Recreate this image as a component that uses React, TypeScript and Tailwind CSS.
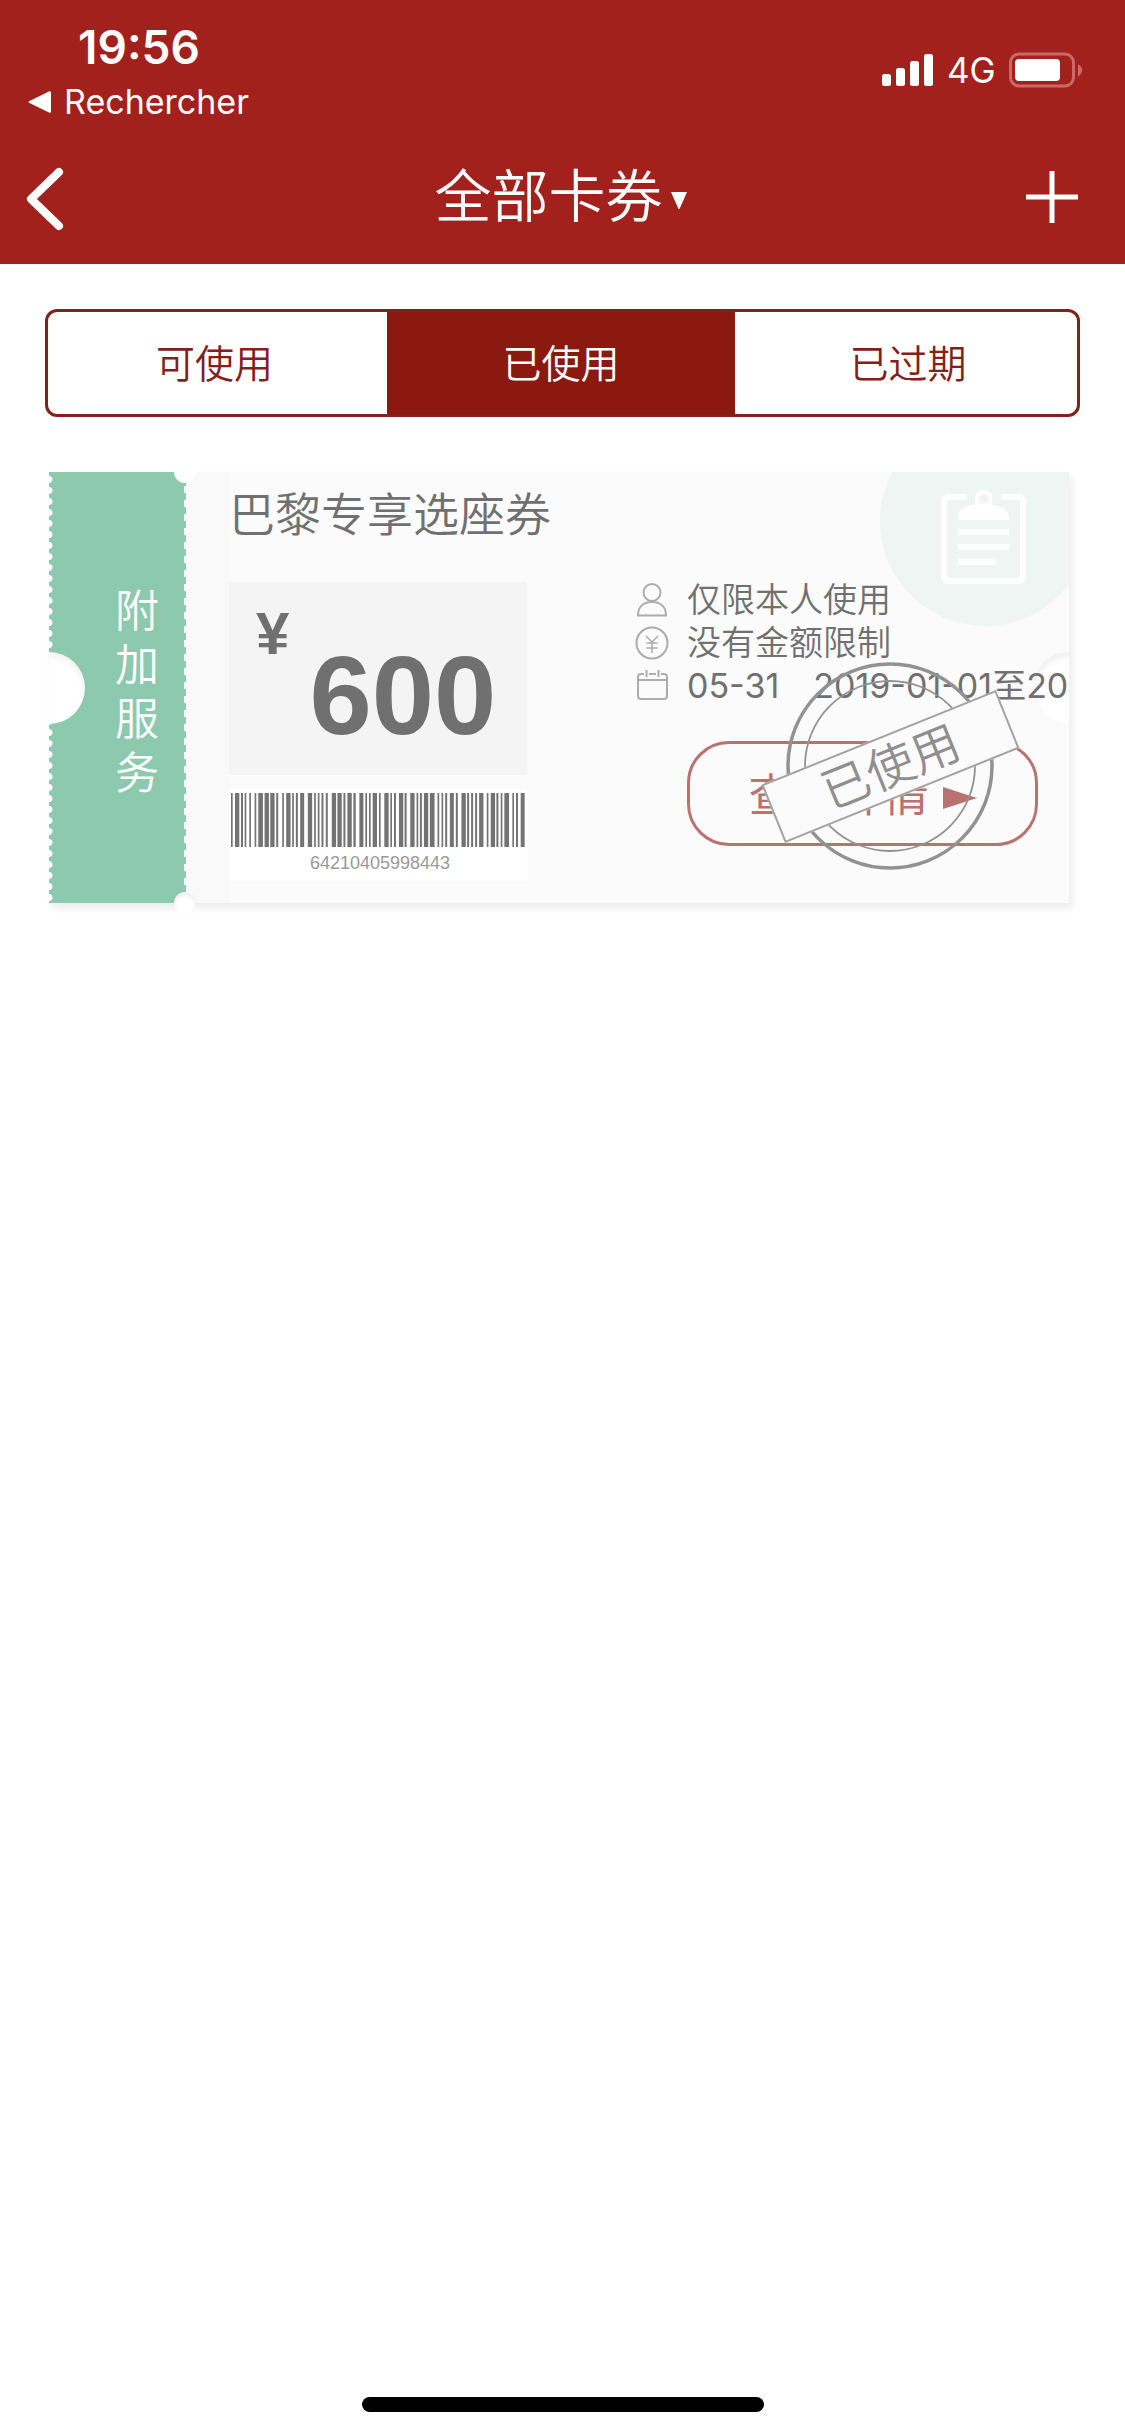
import { useState } from 'react';

const TABS = ['可使用', '已使用', '已过期'];

// [start, width] of every bar, in barcode units
const BARS = [
  [0, 5], [12, 13], [30, 6], [41, 5], [55, 5],
  [71, 5], [82, 14], [101, 13], [118, 13], [136, 6],
  [154, 5], [166, 13], [184, 5], [195, 6], [208, 12],
  [231, 13], [250, 5], [261, 5], [272, 6], [285, 6],
  [303, 13], [320, 13], [338, 6], [350, 13], [368, 7],
  [386, 12], [404, 5], [415, 5], [426, 13], [445, 5],
  [461, 13], [479, 5], [490, 6], [505, 13], [522, 6],
  [539, 13], [558, 5], [568, 6], [580, 13], [598, 14],
  [621, 5], [633, 5], [644, 6], [658, 12], [676, 6],
  [693, 13], [710, 6], [722, 6], [734, 6], [746, 13],
  [769, 5], [781, 13], [798, 6], [811, 5], [822, 14],
  [846, 5], [857, 6], [871, 12],
];

function StatusBar() {
  return (
    <div className="flex h-[132px] items-start justify-between pl-[28px] pr-[42px] font-['Inter','Liberation_Sans',sans-serif]">
      <div className="pt-[23px]">
        <div className="pl-[50px] text-[46px] font-semibold leading-[48px]">19:56</div>
        <a href="#search" className="mt-[13px] flex items-center gap-[13px] text-[34px] leading-[36px]">
          <svg width="23" height="22" viewBox="0 0 23 22" fill="currentColor" aria-hidden="true">
            <path d="M1 10.200 21 .4Q23 0 23 1.500V20.500Q23 22 21 21.600L1 11.800Q0 11 1 10.200Z" />
          </svg>
          Rechercher
        </a>
      </div>
      <div className="flex items-center pt-[52px] text-[35px]">
        <svg width="52" height="32" viewBox="0 0 52 32" fill="currentColor" aria-hidden="true">
          <rect x="0" y="20" width="9" height="12" rx="2.500" />
          <rect x="14" y="14" width="9" height="18" rx="2.500" />
          <rect x="28" y="7" width="9" height="25" rx="2.500" />
          <rect x="42" y="0" width="9" height="32" rx="2.500" />
        </svg>
        <span className="ml-[13px] w-[48px] whitespace-nowrap leading-[36px]">4G</span>
        <svg className="ml-[14px]" width="74" height="36" viewBox="0 0 74 36" aria-hidden="true">
          <rect x="1.500" y="2" width="63" height="32" rx="8.500" fill="none" stroke="#c9696a" strokeWidth="3" />
          <rect x="6" y="7" width="45" height="22" rx="4" fill="#fff" />
          <path d="M69 12.500Q73 14 73 18T69 24.500Z" fill="#c9696a" />
        </svg>
      </div>
    </div>
  );
}

function NavBar() {
  return (
    <div className="grid h-[130px] grid-cols-[1fr_auto_1fr] items-center">
      <button type="button" aria-label="返回" className="ml-[26px] mt-1 justify-self-start">
        <svg width="38" height="64" viewBox="0 0 38 64" fill="none" stroke="currentColor" strokeWidth="8" strokeLinecap="round" strokeLinejoin="round">
          <path d="M33 5 5 32 33 59" />
        </svg>
      </button>
      <button type="button" className="flex items-center gap-[8px] pr-1 text-[57px] font-[350] leading-[72px]">
        全部卡券
        <svg className="mt-2" width="16" height="18" viewBox="0 0 16 18" fill="currentColor" aria-hidden="true">
          <path d="M0 0H16L8.500 17H7.500Z" />
        </svg>
      </button>
      <button type="button" aria-label="添加" className="mr-[47px] justify-self-end">
        <svg width="52" height="52" viewBox="0 0 52 52" stroke="currentColor" strokeWidth="5">
          <path d="M26 0V52M0 26H52" />
        </svg>
      </button>
    </div>
  );
}

function Barcode({ code }: { code: string }) {
  return (
    <div className="mt-[14px] w-[298px] bg-white px-[2px] pt-1 pb-[7px]">
      <svg className="block h-[54px] w-full" viewBox="0 0 884 54" preserveAspectRatio="none" fill="#737373" aria-hidden="true">
        {BARS.map(([x, w]) => (
          <rect key={x} x={x} y="0" width={w} height="54" />
        ))}
      </svg>
      <div className="mt-[5px] pl-1 text-center font-['Liberation_Sans',sans-serif] text-[18px] leading-[22px] text-[#999]">{code}</div>
    </div>
  );
}

function UserIcon() {
  return (
    <svg width="34" height="34" viewBox="0 0 34 34" fill="none" stroke="#acacac" strokeWidth="2">
      <circle cx="17" cy="9.500" r="8.500" />
      <path d="M3 32.500C3 23 9 19 17 19S31 23 31 32.500Z" />
    </svg>
  );
}

function MoneyIcon() {
  return (
    <svg width="34" height="34" viewBox="0 0 34 34" fill="none" stroke="#acacac" strokeWidth="2">
      <circle cx="17" cy="17" r="15.500" />
      <path d="M11 10 17 16 23 10M17 16V27M11.500 17H22.500M11.500 22H22.500" strokeWidth="1.500" />
    </svg>
  );
}

function CalendarIcon() {
  return (
    <svg width="34" height="34" viewBox="0 0 34 34" fill="none" stroke="#acacac" strokeWidth="2">
      <path d="M9 5H6Q3 5 3 8V27Q3 30 6 30H29Q32 30 32 27V8Q32 5 29 5H26M14 5H21M3 11H32M11.500 1V8M23.500 1V8" />
    </svg>
  );
}

function Stamp({ label }: { label: string }) {
  return (
    <div className="pointer-events-none absolute right-[50px] top-[188px] grid w-[258px] place-items-center">
      <svg className="[grid-area:1/1]" width="212" height="212" viewBox="0 0 212 212" fill="none" stroke="#929292" aria-hidden="true">
        <circle cx="106" cy="106" r="102" strokeWidth="3.500" />
        <circle cx="106" cy="106" r="85" strokeWidth="1.800" />
      </svg>
      <span className="flex h-[63px] w-[253px] -rotate-[22deg] items-center justify-center border-2 border-[#a2a2a2] bg-[#fbfbfb] text-[48px] font-[350] text-[#8f8f8f] [grid-area:1/1]">
        {label}
      </span>
    </div>
  );
}

function Ticket() {
  const rows = [
    { icon: <UserIcon />, text: '仅限本人使用' },
    { icon: <MoneyIcon />, text: '没有金额限制' },
    { icon: <CalendarIcon />, text: '05-31\u30002019-01-01至20' },
  ];

  return (
    <article className="ml-[49px] mr-[56px] mt-[55px] flex shadow-[3px_5px_8px_rgba(0,0,0,0.08)]">
      {/* Stub with torn edge */}
      <div className="relative flex w-[137px] shrink-0 overflow-hidden bg-[#8dc9ae]">
        <div className="w-[5px] bg-[radial-gradient(circle_at_0_50%,#fff_3px,#8dc9ae_4px)] bg-[length:5px_11px] bg-[position:0_2px]" />
        <div className="flex flex-1 flex-col items-center justify-center pl-[36px] pt-2 text-[44px] font-[350] leading-[54px] text-white">
          {'附加服务'.split('').map((char) => (
            <span key={char}>{char}</span>
          ))}
        </div>
        <div className="w-[2px] bg-[repeating-linear-gradient(#fafafa_0_7px,#8dc9ae_7px_14px)]" />
        <div className="absolute -left-[36px] top-1/2 size-[72px] -translate-y-1/2 rounded-full bg-white shadow-[inset_-1px_4px_6px_rgba(0,0,0,0.05)]" />
      </div>

      <div className="relative flex flex-1 justify-between overflow-hidden bg-[linear-gradient(90deg,#f9f9f9_43px,#fbfbfb_43px)] pl-[43px]">
        <div className="absolute -right-[21px] -top-[56px] size-[210px] rounded-full bg-[#eff5f3]" />
        <svg className="absolute right-[43px] top-[17px]" width="85" height="96" viewBox="0 0 85 96" fill="none" stroke="#fff" strokeWidth="6" aria-hidden="true">
          <path d="M26 8H8Q3 8 3 13V87Q3 92 8 92H77Q82 92 82 87V13Q82 8 77 8H60" />
          <path d="M17 31Q17 16 34 16V10Q34 1 43 1T51 10V16Q68 17 68 31Z" fill="#fff" stroke="none" />
          <circle cx="43" cy="10" r="5" fill="#eff5f3" stroke="none" />
          <path d="M17 43H68M17 58H68M17 73H55" />
        </svg>
        <div className="absolute -right-[36px] top-1/2 size-[72px] -translate-y-1/2 rounded-full bg-white shadow-[inset_2px_4px_6px_rgba(0,0,0,0.06)]" />

        <div className="relative pb-[22px] pt-3 text-[#707070]">
          <h2 className="text-[46px] font-[350] leading-[60px]">巴黎专享选座券</h2>
          <div className="mt-[38px] flex h-[193px] w-[298px] items-start gap-5 bg-[#f4f4f4] pl-[27px] pt-[22px] font-['Liberation_Sans',sans-serif] font-bold leading-none">
            <span className="text-[60px]">¥</span>
            <span className="mt-9 text-[112px]">600</span>
          </div>
          <Barcode code="64210405998443" />
        </div>

        <div className="relative w-[434px] shrink-0 pt-[106px]">
          <ul className="text-[34px] leading-[43px] text-[#707070]">
            {rows.map((row) => (
              <li key={row.text} className="flex h-[43px] items-center gap-[18px] font-[350] last:font-normal">
                {row.icon}
                <span className="whitespace-nowrap">{row.text}</span>
              </li>
            ))}
          </ul>
          <button
            type="button"
            className="ml-[52px] mt-[34px] flex h-[105px] w-[351px] items-center justify-center gap-[14px] rounded-[42px] border-3 border-[#b97270] pt-1 text-[45px] text-[#b97270]"
          >
            查看详情
            <svg className="mt-1" width="34" height="22" viewBox="0 0 34 22" fill="currentColor" aria-hidden="true">
              <path d="M0 0 34 11 0 22Z" />
            </svg>
          </button>
        </div>
        <Stamp label="已使用" />
      </div>

      {/* Perforation notches between stub and body */}
      <div className="relative order-first w-0">
        <div className="absolute -top-[11px] left-[125px] z-10 size-[22px] rounded-full bg-white" />
        <div className="absolute -bottom-[11px] left-[125px] z-10 size-[22px] rounded-full bg-white shadow-[inset_0_3px_4px_rgba(0,0,0,0.08)]" />
      </div>
    </article>
  );
}

export default function App() {
  const [active, setActive] = useState(1);

  return (
    <div className="flex min-h-screen flex-col bg-white font-['Inter','Noto_Sans_CJK_SC',sans-serif]">
      <header className="bg-[#a3211c] pb-[2px] text-white">
        <StatusBar />
        <NavBar />
      </header>

      <main className="flex-1">
        <div className="mx-[45px] mt-[45px] grid h-[108px] grid-cols-[339fr_348fr_342fr] overflow-hidden rounded-xl border-3 border-[#84201a]">
          {TABS.map((tab, i) => (
            <button
              key={tab}
              type="button"
              aria-pressed={i === active}
              onClick={() => setActive(i)}
              className={`pt-[2px] text-[39px] font-[350] first:pr-1.5 last:pl-1 ${i === active ? 'bg-[#8b1910] text-white' : 'text-[#84201a]'}`}
            >
              {tab}
            </button>
          ))}
        </div>
        <Ticket />
      </main>

      <div className="mx-auto mb-6 h-[15px] w-[402px] rounded-full bg-black" />
    </div>
  );
}
